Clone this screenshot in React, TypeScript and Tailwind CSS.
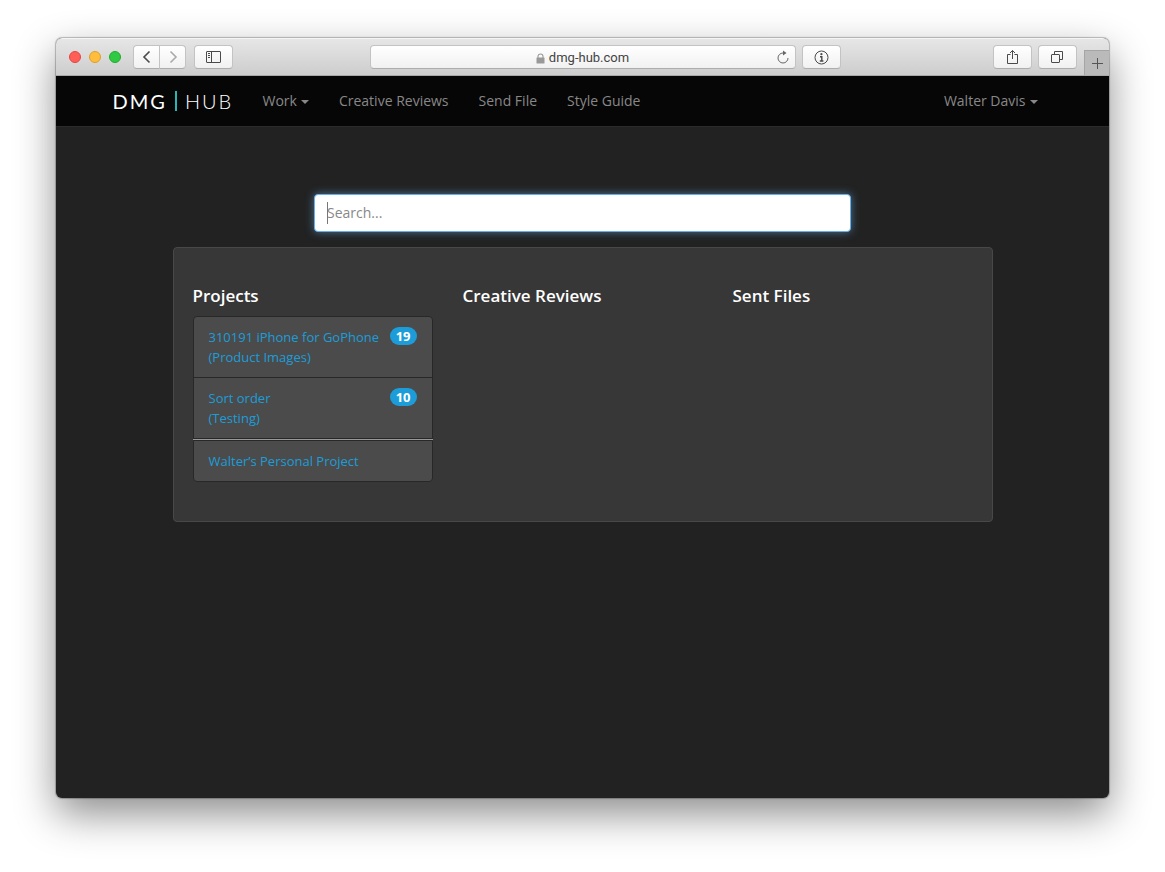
import { useState } from "react";
import type { ReactNode } from "react";

type Project = {
  name: string;
  client?: string;
  count?: number;
};

const navItems = [
  { name: "Creative Reviews", href: "#reviews" },
  { name: "Send File", href: "#send" },
  { name: "Style Guide", href: "#style" },
];

const projects: Project[] = [
  { name: "310191 iPhone for GoPhone", client: "(Product Images)", count: 19 },
  { name: "Sort order", client: "(Testing)", count: 10 },
];

const toolButton =
  "flex h-6 items-center justify-center border border-[#c3c3c3] border-b-[#adadad] bg-linear-to-b from-white to-[#f1f1f1] text-[#4a4a4a]";

const ToolButton = ({
  label,
  className,
  children,
}: {
  label: string;
  className: string;
  children: ReactNode;
}) => (
  <button
    type="button"
    aria-label={label}
    className={`${toolButton} ${className}`}
  >
    {children}
  </button>
);

const Caret = () => (
  <span className="ml-1 inline-block border-x-4 border-t-4 border-x-transparent border-t-current align-middle"></span>
);

const Toolbar = () => {
  return (
    <header className="flex h-[38px] items-center rounded-t-md border-t border-b border-t-[#f5f5f5] border-b-[#a9a9a9] bg-linear-to-b from-[#e6e6e6] to-[#cdcdcd]">
      <div className="flex flex-1 items-center">
        <div className="ml-[13px] flex gap-2">
          <span className="size-3 rounded-full border border-[#e2463f] bg-[#ff5f57]"></span>
          <span className="size-3 rounded-full border border-[#dfa023] bg-[#ffbd3e]"></span>
          <span className="size-3 rounded-full border border-[#1dad2b] bg-[#2fc943]"></span>
        </div>
        <div className="ml-3 flex">
          <ToolButton label="Back" className="w-[27px] rounded-l-sm">
            <svg width="10" height="14" fill="none" stroke="currentColor" strokeWidth="1.6">
              <path d="M7.5 1.5 2 7l5.5 5.5" />
            </svg>
          </ToolButton>
          <ToolButton
            label="Forward"
            className="-ml-px w-[27px] rounded-r-sm"
          >
            <svg width="10" height="14" fill="none" stroke="#aaa" strokeWidth="1.6">
              <path d="M2.5 1.5 8 7l-5.5 5.5" />
            </svg>
          </ToolButton>
        </div>
        <ToolButton label="Sidebar" className="ml-2 w-[39px] rounded-sm">
          <svg width="15" height="12" fill="none" stroke="currentColor">
            <rect x=".5" y=".5" width="14" height="11" rx=".5" />
            <path d="M5.5 .5v11M2 2.5h2M2 4.5h2M2 6.5h2" />
          </svg>
        </ToolButton>
      </div>

      <div className="flex h-6 w-[426px] items-center rounded-sm border border-[#c3c3c3] border-b-[#adadad] bg-linear-to-b from-white to-[#f1f1f1] px-1.5">
        <span className="w-3"></span>
        <a
          href="#home"
          className="flex flex-1 items-center justify-center gap-1 pt-0.5 font-['Roboto',sans-serif] text-[13px] leading-4 text-[#444]"
        >
          <svg width="9" height="11" fill="none">
            <rect x=".5" y="4.5" width="8" height="6" rx=".5" fill="#999" />
            <path d="M2 5V3.5a2.5 2.5 0 0 1 5 0V5" stroke="#999" strokeWidth="1.1" />
          </svg>
          dmg-hub.com
        </a>
        <button type="button" aria-label="Reload" className="text-[#666]">
          <svg width="12" height="14" fill="none" stroke="currentColor">
            <path d="M6 3a5 5 0 1 0 5 5" />
            <path d="M6 .5 9.5 3 6 5.5z" fill="currentColor" stroke="none" />
          </svg>
        </button>
      </div>

      <div className="flex flex-1 items-center self-stretch">
        <ToolButton label="Site info" className="ml-1.5 w-[39px] rounded-sm">
          <svg width="15" height="15" fill="none" stroke="currentColor">
            <circle cx="7.5" cy="7.5" r="6.5" />
            <path d="M6 6.7h1.800V11M5.800 11h3.600" strokeWidth="1.4" />
            <circle cx="7.4" cy="4.2" r="1.1" fill="currentColor" stroke="none" />
          </svg>
        </ToolButton>
        <ToolButton label="Share" className="ml-auto w-[39px] rounded-sm">
          <svg width="13" height="16" fill="none" stroke="currentColor">
            <path d="M4.5 5.5h-3v9h10v-9h-3M6.5 10V1.5M4 4l2.5-2.5L9 4" />
          </svg>
        </ToolButton>
        <ToolButton label="Show tabs" className="mr-[7px] ml-1.5 w-[39px] rounded-sm">
          <svg width="13" height="13" fill="none" stroke="currentColor">
            <rect x=".5" y="3.5" width="8" height="8" rx=".5" />
            <path d="M3.5 3.500v-3h8v8h-3" />
          </svg>
        </ToolButton>
        <button
          type="button"
          aria-label="New tab"
          className="flex h-[25px] w-[25px] items-center justify-center self-end border-t border-l border-[#a5a5a5] bg-[#bababa] text-[#555]"
        >
          <svg width="11" height="11" stroke="currentColor">
            <path d="M5.5 0v11M0 5.5h11" />
          </svg>
        </button>
      </div>
    </header>
  );
};

const Navbar = () => {
  return (
    <nav className="border-b border-[#2b2b2b] bg-[#060606] text-[#888]">
      <div className="mx-auto flex h-[50px] max-w-[970px] items-center px-[15px]">
        <a
          href="#home"
          className="flex w-[135px] items-center gap-2 font-['Lato',sans-serif] text-xl leading-5 text-white"
        >
          <span className="tracking-widest">DMG</span>
          <span className="h-5 w-0.5 bg-[#2bb5b2]"></span>
          <span className="font-light tracking-widest">HUB</span>
        </a>
        <button type="button" className="px-[15px]">
          Work
          <Caret />
        </button>
        {navItems.map((item) => (
          <a key={item.name} href={item.href} className="px-[15px]">
            {item.name}
          </a>
        ))}
        <button type="button" className="ml-auto px-[15px]">
          Walter Davis
          <Caret />
        </button>
      </div>
    </nav>
  );
};

const ProjectLink = ({ project }: { project: Project }) => (
  <a
    href="#project"
    className="-mt-px flex items-start justify-between border border-[#282828] bg-[#4b4b4b] px-[15px] py-2.5 text-[13px] leading-5 text-[#1c9dd9] first:mt-0 first:rounded-t last:mt-0 last:rounded-b"
  >
    <span>
      {project.name}
      {project.client && <span className="block">{project.client}</span>}
    </span>
    {project.count && (
      <span className="rounded-full bg-[#1c9dd9] px-1.5 leading-[18px] font-bold text-white">
        {project.count}
      </span>
    )}
  </a>
);

const Column = ({
  title,
  children,
}: {
  title: string;
  children?: ReactNode;
}) => (
  <section>
    <h2 className="mb-2.5 text-[17px] leading-5 font-semibold text-white">
      {title}
    </h2>
    {children}
  </section>
);

const App = () => {
  const [search, setSearch] = useState("");

  return (
    <div className="flex min-h-screen flex-col bg-white px-14 pt-[38px] pb-[74px] font-['Open_Sans',sans-serif] text-sm leading-5">
      <div className="flex flex-1 flex-col rounded-md bg-[#222] shadow-[0_0_1px_1px_rgba(0,0,0,0.25),0_16px_40px_rgba(0,0,0,0.45)]">
        <Toolbar />
        <Navbar />
        <main className="pt-[67px]">
          <div className="relative mx-auto max-w-[537px]">
            <input
              type="text"
              aria-label="Search"
              placeholder="Search..."
              value={search}
              onChange={(e) => setSearch(e.target.value)}
              className="block h-[38px] w-full rounded border border-[#66afe9] bg-white px-3 pb-0.5 text-[#555] shadow-[0_0_8px_rgba(102,175,233,0.6)] outline-none placeholder:text-[#888]"
            />
            {!search && (
              <span className="absolute inset-y-2 left-[13px] w-px bg-[#777]"></span>
            )}
          </div>

          <div className="mx-auto mt-[15px] grid min-h-[275px] max-w-[820px] grid-cols-3 gap-[30px] rounded border border-[#484848] bg-[#373737] px-[19px] pt-[38px] pb-[39px]">
            <Column title="Projects">
              <div>
                {projects.map((project) => (
                  <ProjectLink key={project.name} project={project} />
                ))}
                <hr className="border-[#999]" />
                <ProjectLink project={{ name: "Walter’s Personal Project" }} />
              </div>
            </Column>
            <Column title="Creative Reviews" />
            <Column title="Sent Files" />
          </div>
        </main>
      </div>
    </div>
  );
};

export default App;
